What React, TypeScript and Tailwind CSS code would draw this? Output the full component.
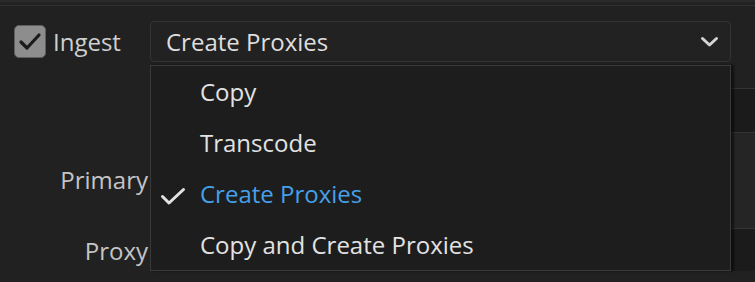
import React from "react";

export default function App() {
  const font = "font-['Open_Sans','Noto_Sans',sans-serif]";
  return (
    <div className={`relative w-[755px] h-[282px] overflow-hidden bg-[#212121] ${font} font-medium antialiased`}>
      {/* top strips */}
      <div className="h-[2px] bg-[#2b2b2b]" />
      <div className="h-[4px] bg-[#232323] border-b border-[#2f2f2f]" />

      {/* ingest row */}
      <div className="mt-[15px] flex items-center h-[41px]">
        <div className="ml-[14px] w-[32px] h-[33px] rounded-[5px] bg-[#8d8d8d] border-[1.5px] border-[#5e5e5e] flex items-center justify-center">
          <svg width="24" height="20" viewBox="0 0 24 20">
            <polyline points="3,10 9,16 21,3" fill="none" stroke="#1b1b1b" strokeWidth="3.2" strokeLinecap="round" strokeLinejoin="round" />
          </svg>
        </div>
        <span className="ml-[7px] w-[97px] text-[24px] text-[#cfcfcf]">Ingest</span>
        <div className="w-[581px] h-[41px] rounded-[4px] bg-[#222222] border border-[#343434] flex items-center pl-[15px] pr-[11px]">
          <span className="flex-1 text-[24px] text-[#dedede]">Create Proxies</span>
          <svg width="19" height="12" viewBox="0 0 19 12">
            <polyline points="2.5,2.5 9.5,9 16.5,2.5" fill="none" stroke="#d4d4d4" strokeWidth="3" strokeLinecap="round" strokeLinejoin="round" />
          </svg>
        </div>
      </div>

      {/* lower area */}
      <div className="flex">
        <div className="w-[150px] flex flex-col items-end pr-[2px] text-[24px] text-[#c4c4c4] leading-[32px]">
          <span className="mt-[102px]">Primary</span>
          <span className="mt-[39px]">Proxy</span>
        </div>
        <div className="flex-1 flex flex-col">
          <div className="mt-[26px] h-[44px] bg-[#1b1b1b] border-t border-[#333333]" />
          <div className="h-[96px] bg-[#252525] border-t border-[#333333]" />
          <div className="h-[43px] bg-[#1b1b1b] border-t border-[#353535]" />
        </div>
      </div>

      {/* open menu */}
      <div className="absolute top-[65px] left-[150px] w-[581px] h-[206px] bg-[#1d1d1d] border border-[#3a3a3a] shadow-[3px_0_2px_rgba(0,0,0,0.5)] text-[24px] leading-[51px]">
        <div className="pl-[49px] text-[#e2e2e2]">Copy</div>
        <div className="pl-[49px] text-[#e2e2e2]">Transcode</div>
        <div className="relative pl-[49px] text-[#45a0ea]">
          <svg className="absolute left-[9px] top-[19px]" width="26" height="19" viewBox="0 0 26 19">
            <polyline points="2.5,9.5 9,16 23.5,2.5" fill="none" stroke="#e2e2e2" strokeWidth="3" strokeLinecap="round" strokeLinejoin="round" />
          </svg>
          Create Proxies
        </div>
        <div className="pl-[49px] text-[#e2e2e2]">Copy and Create Proxies</div>
      </div>
    </div>
  );
}
